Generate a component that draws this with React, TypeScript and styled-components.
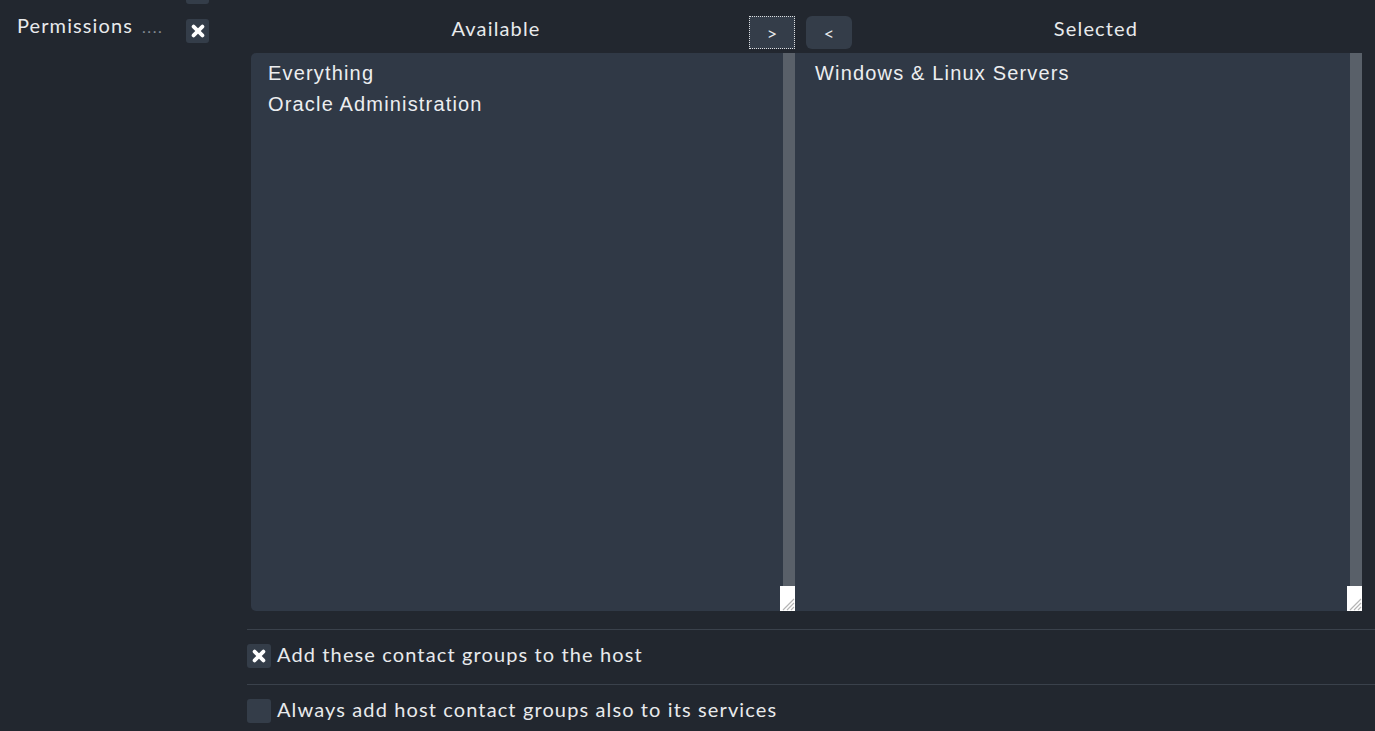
import React from "react";
import styled, { createGlobalStyle } from "styled-components";

const Global = createGlobalStyle`
  html, body { margin: 0; padding: 0; background: rgb(34,39,47); }
  body { font-family: Lato, "Noto Sans", sans-serif; color: rgb(232,234,236); overflow: hidden; }
`;

const Page = styled.div`
  display: grid;
  grid-template-columns: 247px 1fr;
  width: 1375px;
  height: 731px;
  overflow: hidden;
`;

const LeftCol = styled.div`
  display: flex;
  align-items: flex-start;
  padding-left: 17px;
  margin-top: -20px;
`;

const LabelText = styled.div`
  font-size: 20px;
  letter-spacing: 1.1px;
  margin-top: 33px;
  width: 169px;
  white-space: nowrap;
`;

const Dots = styled.span`
  color: rgb(130,137,146);
  font-size: 16px;
  margin-left: 9px;
  letter-spacing: 1.6px;
`;

const ButtonStack = styled.div`
  display: flex;
  flex-direction: column;
  gap: 15px;
`;

const IconBox = styled.div`
  width: 23px;
  height: 24px;
  border-radius: 3px;
  background: rgb(52,61,73);
  display: flex;
  align-items: center;
  justify-content: center;
`;

const RightCol = styled.div`
  display: flex;
  flex-direction: column;
`;

const Header = styled.div`
  display: grid;
  grid-template-columns: 544px 567px;
  padding-left: 4px;
  height: 53px;
`;

const HeadCell = styled.div`
  display: flex;
  align-items: flex-end;
`;

const HeadTitle = styled.div<{ $shift?: number }>`
  flex: 1;
  text-align: center;
  font-size: 20px;
  letter-spacing: 1.15px;
  line-height: 24px;
  margin-bottom: 13px;
  padding-right: ${(p) => p.$shift ?? 0}px;
`;

const ArrowButton = styled.button<{ $focused?: boolean }>`
  width: 46px;
  height: 33px;
  margin-bottom: 4px;
  border: none;
  background: rgb(52,61,73);
  color: rgb(232,234,236);
  font-family: Lato, sans-serif;
  font-size: 18px;
  padding: 0;
  outline: ${(p) => (p.$focused ? "1px dotted rgb(220,222,224)" : "none")};
  outline-offset: -1px;
  border-radius: ${(p) => (p.$focused ? "0" : "6px")};
`;

const LeftArrowWrap = styled.div`
  padding-left: 11px;
  display: flex;
`;

const Lists = styled.div`
  display: grid;
  grid-template-columns: 544px 567px;
  padding-left: 4px;
  height: 558px;
`;

const ListBox = styled.div<{ $first?: boolean }>`
  position: relative;
  display: flex;
  background: rgb(48,57,70);
  border-top-left-radius: ${(p) => (p.$first ? "5px" : "0")};
  border-bottom-left-radius: ${(p) => (p.$first ? "5px" : "0")};
`;

const Items = styled.div<{ $pad: number }>`
  flex: 1;
  padding: 5px 0 0 ${(p) => p.$pad}px;
  font-family: "Liberation Sans", Arial, sans-serif;
  font-size: 20px;
  letter-spacing: 1.17px;
  color: rgb(236,238,240);
`;

const Item = styled.div`
  height: 31px;
  line-height: 31px;
`;

const Scrollbar = styled.div`
  width: 12px;
  background: rgb(89,96,105);
`;

const Grip = styled.div`
  position: absolute;
  right: 0;
  bottom: 0;
  width: 15px;
  height: 25px;
  background: #fff;
`;

const Spacer = styled.div`
  height: 18px;
`;

const Sep = styled.div`
  height: 1px;
  background: rgb(58,65,75);
`;

const CheckRow = styled.label`
  display: flex;
  align-items: center;
  gap: 6px;
  font-size: 20px;
  letter-spacing: 1.12px;
  height: 54px;
  padding-bottom: 2px;
  box-sizing: border-box;
`;

const CheckBox = styled.span`
  width: 24px;
  height: 24px;
  border-radius: 3px;
  background: rgb(52,61,73);
  display: flex;
  align-items: center;
  justify-content: center;
`;

const CheckText = styled.span`
  margin-top: -4px;
`;

const XMark = () => (
  <svg width="14" height="14" viewBox="0 0 14 14">
    <path d="M2.6 2.6 L11.4 11.4 M11.4 2.6 L2.6 11.4" stroke="#fff" strokeWidth="3.8" strokeLinecap="round" />
  </svg>
);

const GripLines = () => (
  <svg width="15" height="25" viewBox="0 0 15 25" style={{ display: "block" }}>
    <path d="M3 24 L14 13 M7 24 L14 17 M11 24 L14 21" stroke="#b5b5b5" strokeWidth="1.2" />
  </svg>
);

export default function App() {
  return (
    <>
      <Global />
      <Page>
        <LeftCol>
          <LabelText>
            Permissions<Dots>....</Dots>
          </LabelText>
          <ButtonStack>
            <IconBox />
            <IconBox>
              <XMark />
            </IconBox>
          </ButtonStack>
        </LeftCol>
        <RightCol>
          <Header>
            <HeadCell>
              <HeadTitle $shift={8}>Available</HeadTitle>
              <ArrowButton $focused>&gt;</ArrowButton>
            </HeadCell>
            <HeadCell>
              <LeftArrowWrap>
                <ArrowButton>&lt;</ArrowButton>
              </LeftArrowWrap>
              <HeadTitle $shift={22}>Selected</HeadTitle>
            </HeadCell>
          </Header>
          <Lists>
            <ListBox $first>
              <Items $pad={17}>
                <Item>Everything</Item>
                <Item>Oracle Administration</Item>
              </Items>
              <Scrollbar />
              <Grip>
                <GripLines />
              </Grip>
            </ListBox>
            <ListBox>
              <Items $pad={20}>
                <Item>Windows &amp; Linux Servers</Item>
              </Items>
              <Scrollbar />
              <Grip>
                <GripLines />
              </Grip>
            </ListBox>
          </Lists>
          <Spacer />
          <Sep />
          <CheckRow>
            <CheckBox>
              <XMark />
            </CheckBox>
            <CheckText>Add these contact groups to the host</CheckText>
          </CheckRow>
          <Sep />
          <CheckRow>
            <CheckBox />
            <CheckText>Always add host contact groups also to its services</CheckText>
          </CheckRow>
        </RightCol>
      </Page>
    </>
  );
}
